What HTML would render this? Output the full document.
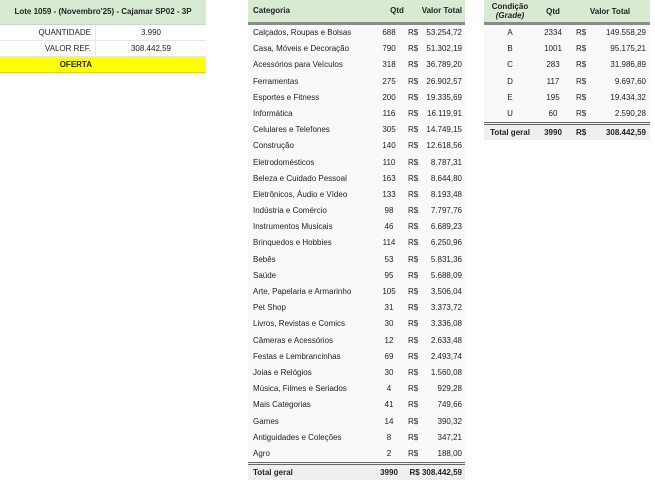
<!DOCTYPE html><html><head><meta charset="utf-8"><style>
*{box-sizing:border-box}
body{margin:0;width:655px;height:480px;background:#fff;font-family:"Liberation Sans",Arial,sans-serif;font-size:8px;color:#222;position:relative;overflow:hidden}
.l{position:absolute;left:0;top:0;width:206px}
.l .h{height:25px;background:#d9ead3;border-bottom:1px solid #c8d6c2;font-weight:bold;text-align:center;line-height:24px;font-size:8px}
.l .r{height:16px;border-bottom:1px solid #e6e6e6;display:flex;line-height:16px}
.l .r div:first-child{width:96px;text-align:right;padding-right:4px;border-right:1px solid #e6e6e6}
.l .r div:last-child{flex:1;text-align:center}
.m{position:absolute;left:248px;top:0;width:217px;background:#f8f9fa}
.m .h{height:25px;background:#d9ead3;font-weight:bold;display:flex;line-height:22px;border-bottom:3px solid #8a8a8a}
.row{display:flex;height:16.2px;line-height:16.2px}
.c1{width:130px;padding-left:5px}
.c2{width:22px;text-align:center}
.c3{width:16px;padding-left:8px}
.c4{width:46px;text-align:right}
.m .t{border-top:3px double #666;font-weight:bold;background:#eef0f0;height:18px;line-height:15px}
.rt{position:absolute;left:484px;top:0;width:166px;background:#f8f9fa}
.rt .h{height:25px;background:#d9ead3;font-weight:bold;display:flex;align-items:center;border-bottom:3px solid #8a8a8a}
.d1{width:52px;text-align:center}.d2{width:34px;text-align:center}.d3{width:26px;padding-left:6px}.d4{width:50px;text-align:right}
.rt .t{border-top:3px double #666;font-weight:bold;background:#eef0f0;height:18px;line-height:15px}
</style></head><body>
<div class="l">
<div class="h">Lote 1059 - (Novembro'25) - Cajamar SP02 - 3P</div>
<div class="r"><div>QUANTIDADE</div><div>3.990</div></div>
<div class="r"><div>VALOR REF.</div><div>308.442,59</div></div>
<div class="r" style="background:#ffff00;font-weight:bold;border-bottom:1px solid #d8d800"><div style="border-right:none">OFERTA</div><div></div></div>
</div>
<div class="m">
<div class="h"><div class="c1">Categoria</div><div style="width:34px;text-align:center;padding-left:4px">Qtd</div><div style="width:50px;text-align:right">Valor Total</div></div>
<div class="row"><div class="c1">Calçados, Roupas e Bolsas</div><div class="c2">688</div><div class="c3">R$</div><div class="c4">53.254,72</div></div>
<div class="row"><div class="c1">Casa, Móveis e Decoração</div><div class="c2">790</div><div class="c3">R$</div><div class="c4">51.302,19</div></div>
<div class="row"><div class="c1">Acessórios para Veículos</div><div class="c2">318</div><div class="c3">R$</div><div class="c4">36.789,20</div></div>
<div class="row"><div class="c1">Ferramentas</div><div class="c2">275</div><div class="c3">R$</div><div class="c4">26.902,57</div></div>
<div class="row"><div class="c1">Esportes e Fitness</div><div class="c2">200</div><div class="c3">R$</div><div class="c4">19.335,69</div></div>
<div class="row"><div class="c1">Informática</div><div class="c2">116</div><div class="c3">R$</div><div class="c4">16.119,91</div></div>
<div class="row"><div class="c1">Celulares e Telefones</div><div class="c2">305</div><div class="c3">R$</div><div class="c4">14.749,15</div></div>
<div class="row"><div class="c1">Construção</div><div class="c2">140</div><div class="c3">R$</div><div class="c4">12.618,56</div></div>
<div class="row"><div class="c1">Eletrodomésticos</div><div class="c2">110</div><div class="c3">R$</div><div class="c4">8.787,31</div></div>
<div class="row"><div class="c1">Beleza e Cuidado Pessoal</div><div class="c2">163</div><div class="c3">R$</div><div class="c4">8.644,80</div></div>
<div class="row"><div class="c1">Eletrônicos, Áudio e Vídeo</div><div class="c2">133</div><div class="c3">R$</div><div class="c4">8.193,48</div></div>
<div class="row"><div class="c1">Indústria e Comércio</div><div class="c2">98</div><div class="c3">R$</div><div class="c4">7.797,76</div></div>
<div class="row"><div class="c1">Instrumentos Musicais</div><div class="c2">46</div><div class="c3">R$</div><div class="c4">6.689,23</div></div>
<div class="row"><div class="c1">Brinquedos e Hobbies</div><div class="c2">114</div><div class="c3">R$</div><div class="c4">6.250,96</div></div>
<div class="row"><div class="c1">Bebês</div><div class="c2">53</div><div class="c3">R$</div><div class="c4">5.831,36</div></div>
<div class="row"><div class="c1">Saúde</div><div class="c2">95</div><div class="c3">R$</div><div class="c4">5.688,09</div></div>
<div class="row"><div class="c1">Arte, Papelaria e Armarinho</div><div class="c2">105</div><div class="c3">R$</div><div class="c4">3.506,04</div></div>
<div class="row"><div class="c1">Pet Shop</div><div class="c2">31</div><div class="c3">R$</div><div class="c4">3.373,72</div></div>
<div class="row"><div class="c1">Livros, Revistas e Comics</div><div class="c2">30</div><div class="c3">R$</div><div class="c4">3.336,08</div></div>
<div class="row"><div class="c1">Câmeras e Acessórios</div><div class="c2">12</div><div class="c3">R$</div><div class="c4">2.633,48</div></div>
<div class="row"><div class="c1">Festas e Lembrancinhas</div><div class="c2">69</div><div class="c3">R$</div><div class="c4">2.493,74</div></div>
<div class="row"><div class="c1">Joias e Relógios</div><div class="c2">30</div><div class="c3">R$</div><div class="c4">1.560,08</div></div>
<div class="row"><div class="c1">Música, Filmes e Seriados</div><div class="c2">4</div><div class="c3">R$</div><div class="c4">929,28</div></div>
<div class="row"><div class="c1">Mais Categorias</div><div class="c2">41</div><div class="c3">R$</div><div class="c4">749,66</div></div>
<div class="row"><div class="c1">Games</div><div class="c2">14</div><div class="c3">R$</div><div class="c4">390,32</div></div>
<div class="row"><div class="c1">Antiguidades e Coleções</div><div class="c2">8</div><div class="c3">R$</div><div class="c4">347,21</div></div>
<div class="row"><div class="c1">Agro</div><div class="c2">2</div><div class="c3">R$</div><div class="c4">188,00</div></div>
<div class="row t"><div class="c1">Total geral</div><div class="c2">3990</div><div style="width:62px;text-align:right">R$ 308.442,59</div></div>
</div>
<div class="rt">
<div class="h"><div class="d1" style="line-height:9px">Condição<br><i>(Grade)</i></div><div class="d2">Qtd</div><div style="width:80px;text-align:center">Valor Total</div></div>
<div class="row"><div class="d1">A</div><div class="d2">2334</div><div class="d3">R$</div><div class="d4">149.558,29</div></div>
<div class="row"><div class="d1">B</div><div class="d2">1001</div><div class="d3">R$</div><div class="d4">95.175,21</div></div>
<div class="row"><div class="d1">C</div><div class="d2">283</div><div class="d3">R$</div><div class="d4">31.986,89</div></div>
<div class="row"><div class="d1">D</div><div class="d2">117</div><div class="d3">R$</div><div class="d4">9.697,60</div></div>
<div class="row"><div class="d1">E</div><div class="d2">195</div><div class="d3">R$</div><div class="d4">19.434,32</div></div>
<div class="row"><div class="d1">U</div><div class="d2">60</div><div class="d3">R$</div><div class="d4">2.590,28</div></div>
<div class="row t"><div class="d1">Total geral</div><div class="d2">3990</div><div class="d3">R$</div><div class="d4">308.442,59</div></div>
</div>
</body></html>
